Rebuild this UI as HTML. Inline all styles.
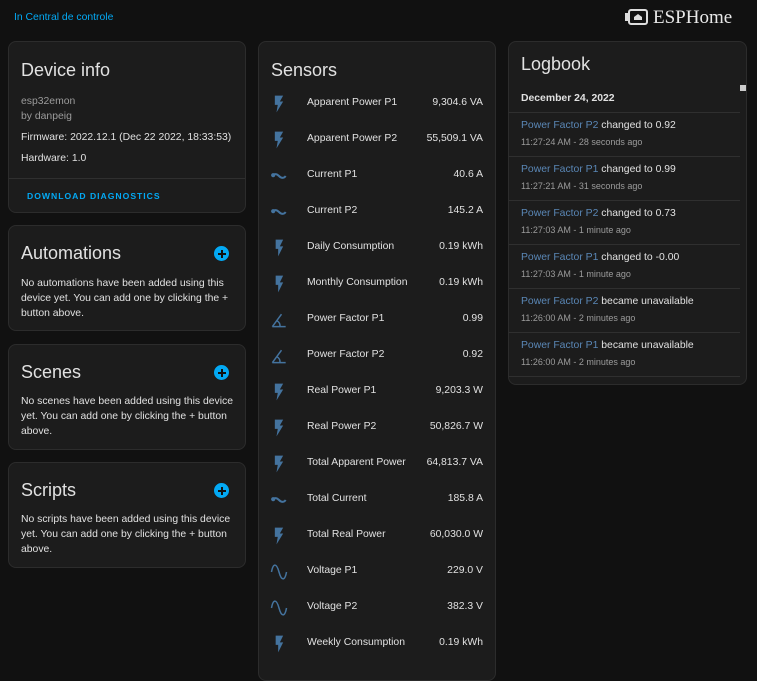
<!DOCTYPE html>
<html><head><meta charset="utf-8"><style>
*{margin:0;padding:0;box-sizing:border-box}
body{width:757px;height:665px;background:#111111;font-family:"Liberation Sans",sans-serif;color:#e1e1e1;position:relative;overflow:hidden}
.a{position:absolute;white-space:nowrap}
.card{position:absolute;background:#1c1c1c;border:1px solid #2c2c2c;border-radius:8px}
.h{font-size:18px;color:#e1e1e1}
.t{font-size:10.4px}
.sub{color:#9b9b9b}
.blue{color:#03a9f4}
.lb{color:#5a87b6}
.sep{position:absolute;height:1px;background:#2f2f2f}
.plus{position:absolute;width:15px;height:15px;border-radius:50%;background:#03a9f4}
.plus:before{content:"";position:absolute;left:3.5px;top:6.5px;width:8px;height:2px;background:#111}
.plus:after{content:"";position:absolute;left:6.5px;top:3.5px;width:2px;height:8px;background:#111}
svg.i{position:absolute;width:20px;height:20px}
.n{position:absolute;left:48px;font-size:10.4px;color:#e1e1e1}
.v{position:absolute;right:12px;font-size:10.4px;color:#e1e1e1}
</style></head><body>
<div class="a blue" style="left:14px;top:12px;font-size:10.4px">In Central de controle</div>
<svg class="a" style="left:625px;top:9px" width="24" height="16" viewBox="0 0 24 16"><rect x="4" y="1" width="18" height="14" rx="2" fill="none" stroke="#ddd" stroke-width="2"/><rect x="0" y="4" width="3" height="8" fill="#ddd"/><path d="M9 11V8l4-3 4 3v3z" fill="#ddd"/></svg>
<div class="a" style="left:653px;top:7px;font-size:19px;font-family:'Liberation Serif',serif;color:#e8e8e8">ESPHome</div>

<div class="card" style="left:8px;top:41px;width:238px;height:172px">
<div class="a h" style="left:12px;top:18px">Device info</div>
<div class="a t sub" style="left:12px;top:54px">esp32emon</div>
<div class="a t sub" style="left:12px;top:69px">by danpeig</div>
<div class="a t" style="left:12px;top:90px">Firmware: 2022.12.1 (Dec 22 2022, 18:33:53)</div>
<div class="a t" style="left:12px;top:111px">Hardware: 1.0</div>
<div class="sep" style="left:0;right:0;top:136px"></div>
<div class="a blue" style="left:18px;top:149px;font-size:8.6px;font-weight:bold;letter-spacing:1px">DOWNLOAD DIAGNOSTICS</div>
</div>

<div class="card" style="left:8px;top:225px;width:238px;height:106px">
<div class="a h" style="left:12px;top:17px">Automations</div><div class="plus" style="left:205px;top:20px"></div>
<div class="a t" style="left:12px;top:50px;line-height:15px;white-space:normal;width:212px">No automations have been added using this device yet. You can add one by clicking the + button above.</div>
</div>
<div class="card" style="left:8px;top:344px;width:238px;height:106px">
<div class="a h" style="left:12px;top:17px">Scenes</div><div class="plus" style="left:205px;top:20px"></div>
<div class="a t" style="left:12px;top:49px;line-height:15px;white-space:normal;width:212px">No scenes have been added using this device yet. You can add one by clicking the + button above.</div>
</div>
<div class="card" style="left:8px;top:462px;width:238px;height:106px">
<div class="a h" style="left:12px;top:17px">Scripts</div><div class="plus" style="left:205px;top:20px"></div>
<div class="a t" style="left:12px;top:49px;line-height:15px;white-space:normal;width:212px">No scripts have been added using this device yet. You can add one by clicking the + button above.</div>
</div>

<div class="card" style="left:258px;top:41px;width:238px;height:640px">
<div class="a h" style="left:12px;top:18px">Sensors</div>
<div id="rows"></div>
</div>

<div class="card" style="left:508px;top:41px;width:239px;height:344px;overflow:hidden">
<div class="a h" style="left:12px;top:12px">Logbook</div>
<div class="a t" style="left:12px;top:51px;font-weight:bold">December 24, 2022</div>
<div id="log"></div>
<div class="a" style="left:231px;top:43px;width:6px;height:6px;background:#ccc"></div>
</div>

<script>
var P={b:'<path d="M7 2h10l-4 7h4L9 22l1.5-9H7z" fill="#44739e"/>',
f:'<path d="M8 2v11h3v9l6-12h-4l4-8z" fill="#44739e"/>',
c:'<path d="M4 12c2-3 5-3 8 0s6 3 8 0" fill="none" stroke="#44739e" stroke-width="2.4"/><circle cx="5" cy="11" r="2.5" fill="#44739e"/>',
a:'<path d="M4 20h16M4 20L15 5M9.5 13a6 6 0 0 1 3.5 7" fill="none" stroke="#44739e" stroke-width="1.8"/>',
s:'<path d="M3 12C5 1 9 1 12 12S19 23 21 12" fill="none" stroke="#44739e" stroke-width="1.8"/>'};
var R=[['b','Apparent Power P1','9,304.6 VA'],['b','Apparent Power P2','55,509.1 VA'],['c','Current P1','40.6 A'],['c','Current P2','145.2 A'],['f','Daily Consumption','0.19 kWh'],['f','Monthly Consumption','0.19 kWh'],['a','Power Factor P1','0.99'],['a','Power Factor P2','0.92'],['b','Real Power P1','9,203.3 W'],['b','Real Power P2','50,826.7 W'],['b','Total Apparent Power','64,813.7 VA'],['c','Total Current','185.8 A'],['b','Total Real Power','60,030.0 W'],['s','Voltage P1','229.0 V'],['s','Voltage P2','382.3 V'],['f','Weekly Consumption','0.19 kWh']];
var h='';R.forEach(function(r,i){var y=55+i*36;
h+='<svg class="i" viewBox="0 0 24 24" style="left:10px;top:'+(y-3)+'px">'+P[r[0]]+'</svg><div class="n" style="top:'+y+'px">'+r[1]+'</div><div class="v" style="top:'+y+'px">'+r[2]+'</div>';});
document.getElementById('rows').innerHTML=h;
var L=[['Power Factor P2','changed to 0.92','11:27:24 AM - 28 seconds ago'],['Power Factor P1','changed to 0.99','11:27:21 AM - 31 seconds ago'],['Power Factor P2','changed to 0.73','11:27:03 AM - 1 minute ago'],['Power Factor P1','changed to -0.00','11:27:03 AM - 1 minute ago'],['Power Factor P2','became unavailable','11:26:00 AM - 2 minutes ago'],['Power Factor P1','became unavailable','11:26:00 AM - 2 minutes ago'],['Power Factor P2','became unavailable','11:26:00 AM - 2 minutes ago']];
var g='';L.forEach(function(e,i){var y=70+i*44;
g+='<div class="sep" style="left:0;width:231px;top:'+y+'px"></div><div class="a t" style="left:12px;top:'+(y+8)+'px"><span class="lb">'+e[0]+'</span> '+e[1]+'</div><div class="a sub" style="left:12px;top:'+(y+25)+'px;font-size:9px">'+e[2]+'</div>';});
document.getElementById('log').innerHTML=g;
</script>
</body></html>
